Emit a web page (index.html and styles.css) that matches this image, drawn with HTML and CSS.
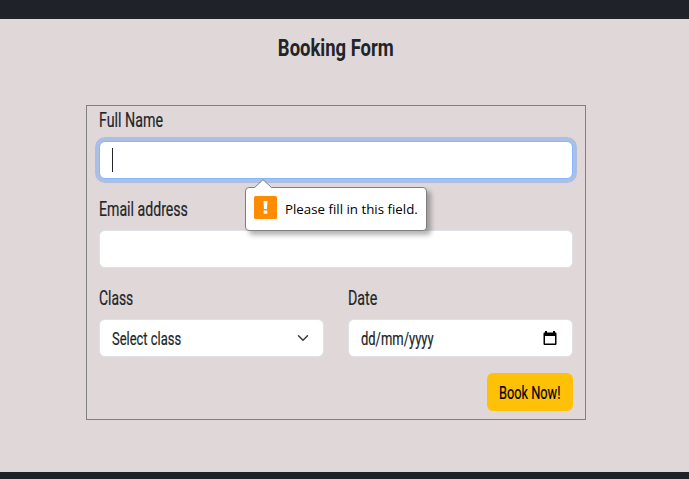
FILE: index.html
```html
<!DOCTYPE html>
<html lang="en">
<head>
<meta charset="utf-8">
<title>Booking Form</title>
<link rel="stylesheet" href="styles.css">
</head>
<body>
<main class="booking">
  <h1 class="title"><span class="cond title-text">Booking Form</span></h1>
  <form class="form">
    <div class="field">
      <div class="label"><span class="cond t-name">Full Name</span></div>
      <div class="control focused"><span class="caret"></span></div>
      <div class="tooltip">
        <svg class="tip-arrow" width="18" height="9" viewBox="0 0 18 9"><path d="M0 9L1 8.500L9 .7L17 8.500L18 9Z" fill="#fff"/><path d="M.5 8.500L9 .7L17.500 8.500" fill="none" stroke="#858585"/></svg>
        <svg class="tip-icon" width="23" height="23" viewBox="0 0 23 23"><rect width="23" height="23" rx="1.500" fill="#ff8c00"/><path d="M9.500 5H13.500L13 13H10ZM9.700 14.500H13.300V17.800H9.700Z" fill="#fff"/></svg>
        <span class="tip-text">Please fill in this field.</span>
      </div>
    </div>
    <div class="field">
      <div class="label"><span class="cond t-email">Email address</span></div>
      <div class="control"></div>
    </div>
    <div class="row">
      <div class="field">
        <div class="label"><span class="cond t-class">Class</span></div>
        <div class="control"><span class="cond t-select">Select class</span>
          <svg class="chevron" width="12" height="12" viewBox="0 0 16 16"><path d="M2 5l6 6 6-6" fill="none" stroke="#343a40" stroke-width="2" stroke-linecap="round" stroke-linejoin="round"/></svg>
        </div>
      </div>
      <div class="field">
        <div class="label"><span class="cond t-date">Date</span></div>
        <div class="control"><span class="cond t-format">dd/mm/yyyy</span>
          <svg class="calendar" width="14" height="15" viewBox="0 0 14 15"><path d="M2 0H4V1.500H10V0H12V1.500H12.500Q13.500 1.500 13.500 2.500V13Q13.500 14 12.500 14H1.500Q.5 14 .5 13V2.500Q.5 1.500 1.500 1.500H2ZM2 5V12.600H12V5Z" fill="#000" fill-rule="evenodd"/></svg>
        </div>
      </div>
    </div>
    <div class="actions"><button class="button" type="button"><span class="cond t-book">Book Now!</span></button></div>
  </form>
</main>
</body>
</html>
```
FILE: styles.css
```css
* { box-sizing: border-box; }
body {
  margin: 0;
  height: 479px;
  padding: 19px 0 7px;
  overflow: hidden;
  background: #1f2229;
  color: #212529;
  font-family: Roboto, sans-serif;
}
.booking {
  height: 453px;
  padding-top: 14px;
  background: #e0d8d8;
}
.title {
  width: 500px;
  height: 30px;
  margin: 0 0 42px 86px;
  font-size: 23.5px;
  line-height: 31px;
  font-weight: 700;
  text-align: center;
}
.cond {
  display: inline-block;
  white-space: nowrap;
  transform-origin: left center;
  -webkit-text-stroke: .2px currentColor;
}
.title .title-text {
  transform: scaleX(.785);
  transform-origin: center;
  -webkit-text-stroke: 0;
}
.form {
  width: 500px;
  height: 315px;
  margin-left: 86px;
  padding: 0 12px;
  border: 1px solid #808080;
}
.field { position: relative; margin-bottom: 16px; }
.label {
  height: 27px;
  margin-bottom: 8px;
  font-size: 19.5px;
  line-height: 29px;
}
.control {
  display: flex;
  align-items: center;
  height: 38px;
  padding: 0 12px;
  border: 1px solid #dee2e6;
  border-radius: 6px;
  background: #fff;
  font-size: 17.5px;
}
.control .cond { padding-top: 1px; }
.focused { border-color: #86b7fe; box-shadow: 0 0 0 4px #abbee3; }
.caret { width: 1px; height: 24px; background: #212529; }
.row { display: grid; grid-template-columns: 1fr 1fr; gap: 24px; }
.chevron { margin-left: auto; margin-right: 2px; }
.calendar { margin-left: auto; margin-right: 3px; }
.t-name { transform: scaleX(.73); }
.t-email { transform: scaleX(.725); }
.t-class { transform: scaleX(.71); }
.t-date { transform: scaleX(.73); }
.t-select { transform: scaleX(.74); }
.t-format { transform: scaleX(.74); }
.actions { display: flex; justify-content: flex-end; }
.button {
  width: 86px;
  height: 38px;
  padding: 2px 12px 0;
  border: 0;
  border-radius: 6px;
  background: #ffc107;
  color: #000;
  font: 17.5px Roboto, sans-serif;
  text-align: left;
}
.t-book { transform: scaleX(.73); }
.tooltip {
  position: absolute;
  z-index: 2;
  left: 146px;
  top: 81px;
  display: flex;
  align-items: center;
  width: 182px;
  height: 44px;
  padding: 0 8px;
  border: 1px solid #808080;
  border-radius: 4px;
  background: #fff;
  box-shadow: 4px 4px 5px rgba(0, 0, 0, .3);
}
.tip-arrow { position: absolute; left: 8px; top: -9px; }
.tip-icon { flex: none; margin-top: -3px; }
.tip-text {
  margin-left: 8px;
  color: #000;
  font: 13.3px "Open Sans", sans-serif;
  white-space: nowrap;
}
```
